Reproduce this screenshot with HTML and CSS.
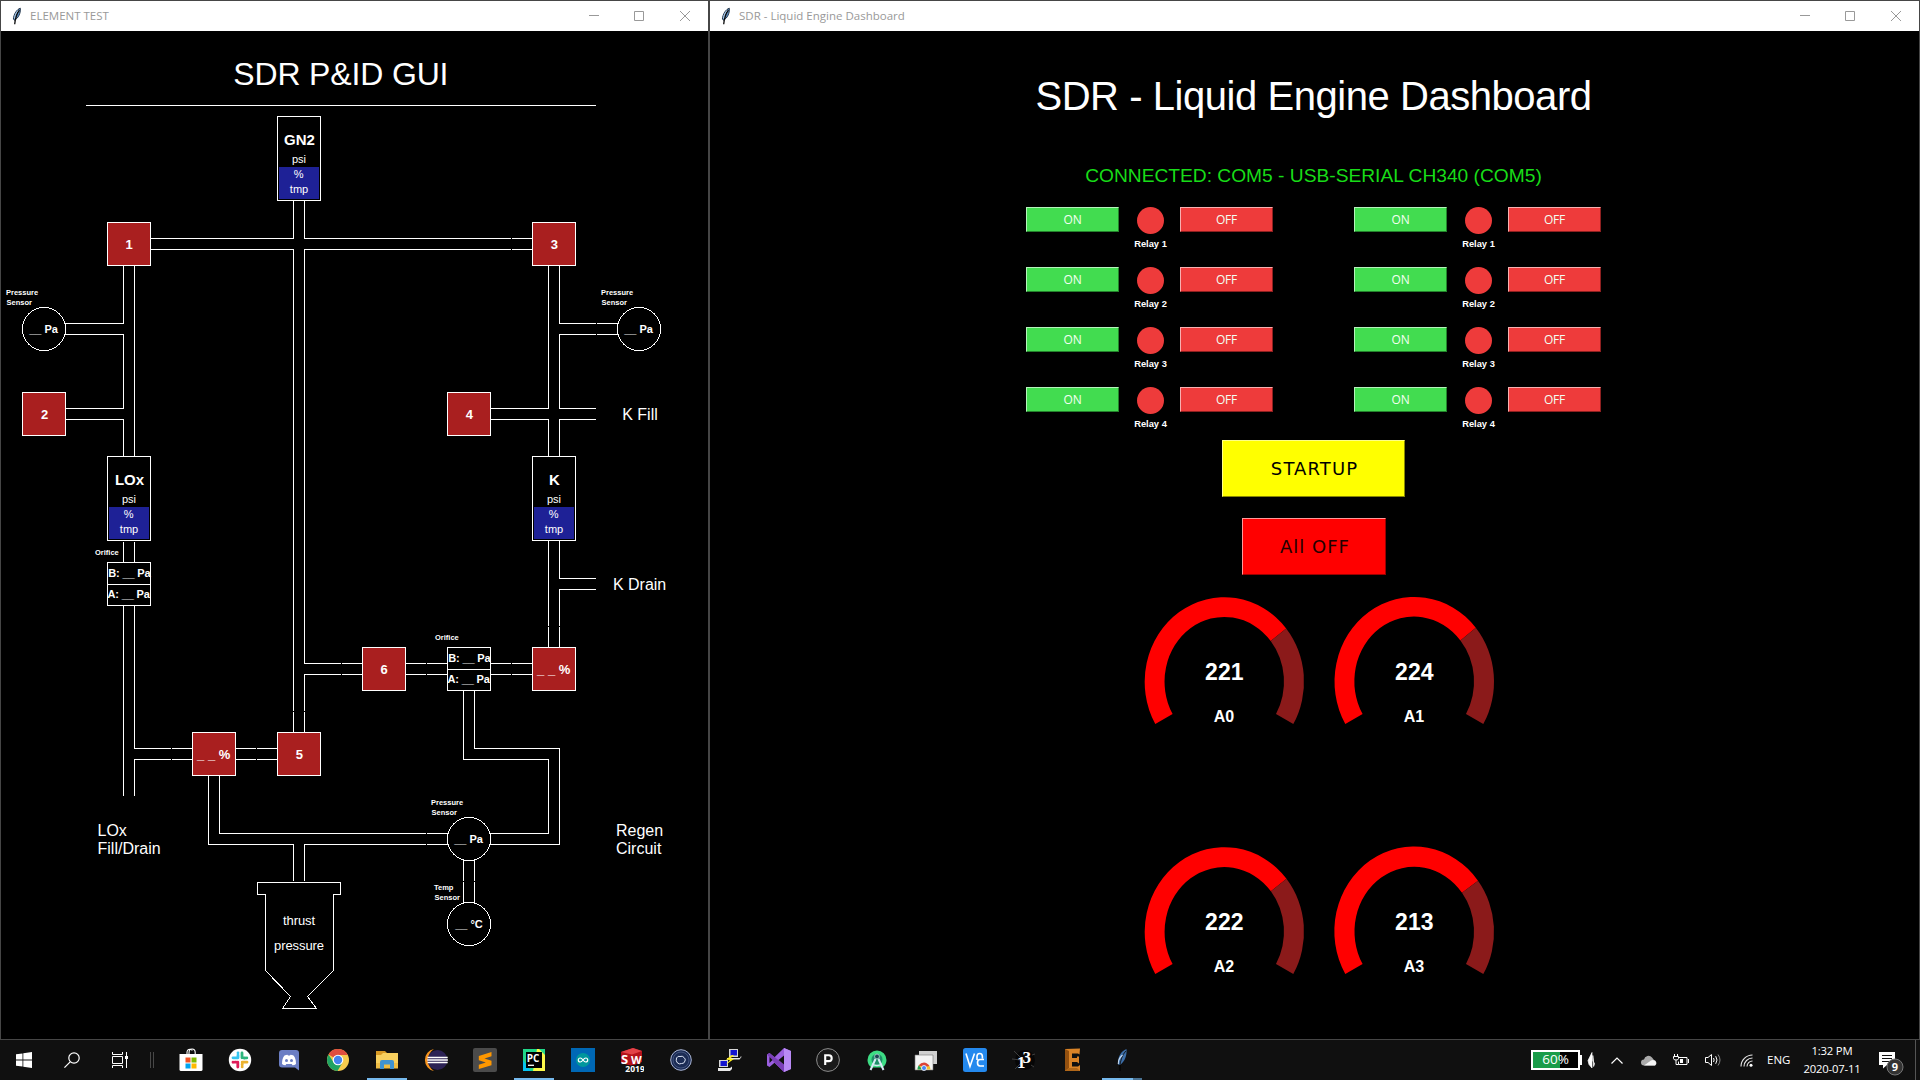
FILE: index.html
```html
<!DOCTYPE html>
<html lang="en">
<head>
<meta charset="utf-8">
<title>SDR - Liquid Engine Dashboard</title>
<link rel="stylesheet" href="styles.css">
</head>
<body>
<svg class="defs" width="0" height="0" aria-hidden="true">
  <defs>
    <symbol id="feather" viewBox="0 0 12 18">
      <path d="M9.3 1.2C6 2.2 2.6 7 2.4 12.2l1.2 1C7.300 11 9.800 6.500 9.300 1.200z" fill="#5c8fc4" stroke="#16283c" stroke-width=".9"/>
      <path d="M8.400 3C6 6 4.400 10 3.700 17.200" fill="none" stroke="#0b0b0b" stroke-width="1.300"/>
      <path d="M7 3.500C5 5.500 3.700 8.500 3.500 11.500" fill="none" stroke="#cfe2f3" stroke-width=".8"/>
    </symbol>
    <symbol id="win-min" viewBox="0 0 10 10"><path d="M0 4.500h10" stroke="#999" fill="none"/></symbol>
    <symbol id="win-max" viewBox="0 0 10 10"><path d="M.5.5h9v9h-9z" stroke="#999" fill="none"/></symbol>
    <symbol id="win-close" viewBox="0 0 10 10"><path d="M0 0l10 10M10 0L0 10" stroke="#999" fill="none"/></symbol>
    <g id="valve"><rect x=".5" y=".5" width="43" height="43" class="valve"/></g>
    <g id="tank">
      <rect x=".5" y=".5" width="43" height="84" class="shape"/>
      <rect x="2" y="51" width="40" height="32" class="liquid"/>
      <text x="22" y="47" class="t11 mid">psi</text>
      <text x="21.700" y="61.500" class="t11 mid">%</text>
      <text x="22" y="77" class="t11 mid">tmp</text>
    </g>
    <g id="orifice">
      <path d="M.5.5h43v43h-43zM.5 22.500h43" class="shape"/>
      <text x="-12" y="-7.300" class="tag">Orifice</text>
      <text x="1.300" y="14.700" class="reading">B: __ Pa</text>
      <text x=".5" y="35.700" class="reading">A: __ Pa</text>
    </g>
    <g id="psensor">
      <circle cx="22" cy="22" r="21.500" class="shape"/>
      <text x="-16" y="-12" class="tag">Pressure</text>
      <text x="-15.500" y="-2" class="tag">Sensor</text>
      <text x="21.600" y="26" class="t11 b mid">__ Pa</text>
    </g>
  </defs>
</svg>

<div class="desktop">
  <main class="windows">
    <section class="window pid">
      <header class="titlebar">
        <svg class="app-icon"><use href="#feather"/></svg>
        <span class="caption element">ELEMENT TEST</span>
        <span class="ctl"><svg><use href="#win-min"/></svg></span>
        <span class="ctl"><svg><use href="#win-max"/></svg></span>
        <span class="ctl"><svg><use href="#win-close"/></svg></span>
      </header>
      <svg class="diagram" viewBox="1 31 707 1008" width="707" height="1008">
        <text x="340.800" y="85" class="heading mid">SDR P&amp;ID GUI</text>
        <path class="line" d="M86 105.500H596"/>

        <path class="line" d="
          M293.500 201V238.500H151 M304.500 201V238.500H532
          M151 249.500H293.500V732 M532 249.500H304.500V663.500H362
          M362 674.500H304.500V732
          M123.500 266V323.500H65 M134.500 266V456
          M65 334.500H123.500V408.500H66 M66 419.500H123.500V456
          M123.500 542V562 M134.500 542V562
          M123.500 606V796 M134.500 606V748.500H192 M192 759.500H134.500V796
          M236 748.500H277 M236 759.500H277
          M208.500 776V844.500H293.500V881 M219.500 776V833.500H448
          M448 844.500H304.500V881
          M548.500 266V408.500H491 M559.500 266V323.500H618
          M618 334.500H559.500V408.500H596 M491 419.500H548.500V456
          M596 419.500H559.500V456
          M548.500 541V647 M559.500 541V578.500H596 M596 589.500H559.500V647
          M406 663.500H447 M406 674.500H447 M491 663.500H532 M491 674.500H532
          M463.500 691V759.500H548.500V833.500H490
          M474.500 691V748.500H559.500V844.500H490
          M463.500 860V903 M474.500 860V903"/>
        <path class="joint" d="
          M511.500 237V251 M596.500 322V336 M341.500 662V676 M426.500 662V676 M511.500 662V676
          M171.500 747V761 M256.500 747V761 M426.500 832V846
          M292 711.500H306 M547 626.500H561 M462 881.500H476"/>

        <use href="#tank" x="277" y="116"/><text x="299.500" y="145" class="name mid">GN2</text>
        <use href="#tank" x="107" y="456"/><text x="129.500" y="485" class="name mid">LOx</text>
        <use href="#tank" x="532" y="456"/><text x="554.500" y="485" class="name mid">K</text>

        <use href="#valve" x="107" y="222"/><text x="129" y="249" class="num mid">1</text>
        <use href="#valve" x="22" y="392"/><text x="44.500" y="419" class="num mid">2</text>
        <use href="#valve" x="532" y="222"/><text x="554.300" y="249" class="num mid">3</text>
        <use href="#valve" x="447" y="392"/><text x="469.300" y="419" class="num mid">4</text>
        <use href="#valve" x="277" y="732"/><text x="299.300" y="759" class="num mid">5</text>
        <use href="#valve" x="362" y="647"/><text x="384.200" y="674" class="num mid">6</text>
        <use href="#valve" x="192" y="732"/><text x="213.700" y="759" class="num mid">_ _ %</text>
        <use href="#valve" x="532" y="647"/><text x="553.700" y="674" class="num mid">_ _ %</text>

        <use href="#orifice" x="107" y="562"/>
        <use href="#orifice" x="447" y="647"/>
        <use href="#psensor" x="22" y="307"/>
        <use href="#psensor" x="617" y="307"/>
        <use href="#psensor" x="447" y="817"/>
        <circle cx="469" cy="924" r="21.500" class="shape"/>
        <text x="434" y="890" class="tag">Temp</text>
        <text x="434.500" y="900" class="tag">Sensor</text>
        <text x="469" y="928" class="t11 b mid">__ °C</text>

        <path class="shape" d="M257.500 882.500H340.500V894.500H333.500V970.500L307.500 996.500L316.500 1008.500H282.500L290.500 996.500L265.500 970.500V894.500H257.500Z"/>
        <text x="299" y="925" class="t13 mid">thrust</text>
        <text x="299" y="950" class="t13 mid">pressure</text>

        <text x="640" y="420" class="t16 mid">K Fill</text>
        <text x="639.600" y="590" class="t16 mid">K Drain</text>
        <text x="97.500" y="836" class="t16">LOx</text>
        <text x="97.500" y="854" class="t16">Fill/Drain</text>
        <text x="616" y="836" class="t16">Regen</text>
        <text x="616" y="854" class="t16">Circuit</text>
      </svg>
    </section>

    <section class="window dash">
      <header class="titlebar">
        <svg class="app-icon"><use href="#feather"/></svg>
        <span class="caption">SDR - Liquid Engine Dashboard</span>
        <span class="ctl"><svg><use href="#win-min"/></svg></span>
        <span class="ctl"><svg><use href="#win-max"/></svg></span>
        <span class="ctl"><svg><use href="#win-close"/></svg></span>
      </header>
      <div class="dash-body">
        <h1>SDR - Liquid Engine Dashboard</h1>
        <p class="status">CONNECTED: COM5 - USB-SERIAL CH340 (COM5)</p>
        <div class="relays">
          <div class="relay"><button class="btn on">ON</button><div class="lamp"><i></i><b>Relay 1</b></div><button class="btn off">OFF</button></div>
          <div class="relay"><button class="btn on">ON</button><div class="lamp"><i></i><b>Relay 1</b></div><button class="btn off">OFF</button></div>
          <div class="relay"><button class="btn on">ON</button><div class="lamp"><i></i><b>Relay 2</b></div><button class="btn off">OFF</button></div>
          <div class="relay"><button class="btn on">ON</button><div class="lamp"><i></i><b>Relay 2</b></div><button class="btn off">OFF</button></div>
          <div class="relay"><button class="btn on">ON</button><div class="lamp"><i></i><b>Relay 3</b></div><button class="btn off">OFF</button></div>
          <div class="relay"><button class="btn on">ON</button><div class="lamp"><i></i><b>Relay 3</b></div><button class="btn off">OFF</button></div>
          <div class="relay"><button class="btn on">ON</button><div class="lamp"><i></i><b>Relay 4</b></div><button class="btn off">OFF</button></div>
          <div class="relay"><button class="btn on">ON</button><div class="lamp"><i></i><b>Relay 4</b></div><button class="btn off">OFF</button></div>
        </div>
        <button class="big startup">STARTUP</button>
        <button class="big alloff">All OFF</button>
        <div class="gauges">
          <svg class="gauge" viewBox="-95.300 -84.700 190 140">
            <path class="g-on" d="M-69 42.400A79.700 84.700 0 0 1 61.900 -53.300L46.400 -40.700A59.700 64.700 0 0 0 -51.700 32.400Z"/>
            <path class="g-off" d="M61.900 -53.300A79.700 84.700 0 0 1 69 42.400L51.700 32.400A59.700 64.700 0 0 0 46.400 -40.700Z"/>
            <text x="0" y="-2" class="g-val mid">221</text><text x="-.3" y="40.300" class="g-name mid">A0</text>
          </svg>
          <svg class="gauge" viewBox="-95.300 -84.700 190 140">
            <path class="g-on" d="M-69 42.400A79.700 84.700 0 0 1 61.500 -53.900L46.100 -41.200A59.700 64.700 0 0 0 -51.700 32.400Z"/>
            <path class="g-off" d="M61.500 -53.900A79.700 84.700 0 0 1 69 42.400L51.700 32.400A59.700 64.700 0 0 0 46.100 -41.200Z"/>
            <text x="0" y="-2" class="g-val mid">224</text><text x="-.3" y="40.300" class="g-name mid">A1</text>
          </svg>
          <svg class="gauge" viewBox="-95.300 -84.700 190 140">
            <path class="g-on" d="M-69 42.400A79.700 84.700 0 0 1 62.200 -52.900L46.600 -40.400A59.700 64.700 0 0 0 -51.700 32.400Z"/>
            <path class="g-off" d="M62.200 -52.900A79.700 84.700 0 0 1 69 42.400L51.700 32.400A59.700 64.700 0 0 0 46.600 -40.400Z"/>
            <text x="0" y="-2" class="g-val mid">222</text><text x="-.3" y="40.300" class="g-name mid">A2</text>
          </svg>
          <svg class="gauge" viewBox="-95.300 -84.700 190 140">
            <path class="g-on" d="M-69 42.400A79.700 84.700 0 0 1 63.700 -51L47.700 -38.900A59.700 64.700 0 0 0 -51.700 32.400Z"/>
            <path class="g-off" d="M63.700 -51A79.700 84.700 0 0 1 69 42.400L51.700 32.400A59.700 64.700 0 0 0 47.700 -38.900Z"/>
            <text x="0" y="-2" class="g-val mid">213</text><text x="-.3" y="40.300" class="g-name mid">A3</text>
          </svg>
        </div>
      </div>
    </section>
  </main>

  <footer class="taskbar">
    <div class="system">
      <span class="sys"><svg viewBox="0 0 16 16" width="16" height="16"><path fill="#fff" d="M0 2.300L6.500 1.400V7.600H0zM7.300 1.200L16 0V7.600H7.300zM0 8.400H6.500V14.600L0 13.700zM7.300 8.400H16V16L7.300 14.800z"/></svg></span>
      <span class="sys"><svg viewBox="0 0 16 16" width="16" height="16"><g fill="none" stroke="#fff" stroke-width="1.200"><circle cx="10" cy="6" r="5.200"/><path d="M6.200 9.800L.4 15.600"/></g></svg></span>
      <span class="sys"><svg viewBox="0 0 16 16" width="16" height="16"><g fill="none" stroke="#fff"><path d="M.5 0v2.500h10V0M.5 16v-2.500h10V16M.5 4.500h10v7H.5zM14.500 0v16"/><path d="M13 4h3v3h-3z" fill="#fff" stroke="none"/></g></svg></span>
      <span class="grip"></span>
    </div>
    <nav class="apps">
      <span class="app"><svg viewBox="0 0 24 24"><path d="M8 7V4.500Q8 1.200 11 1.200Q12.500 1.200 13.300 2.500M10 7V5Q10 1 13 1Q16.200 1 16.200 4.500V7" fill="none" stroke="#fff" stroke-width="1.100"/><path d="M.5 6h23v15.500q0 1.500-1.500 1.500H2q-1.500 0-1.500-1.500z" fill="#fff"/><path d="M6.500 9.500h5v5h-5z" fill="#f25022"/><path d="M12.500 9.500h5v5h-5z" fill="#7fba00"/><path d="M6.500 15.500h5v5h-5z" fill="#00a4ef"/><path d="M12.500 15.500h5v5h-5z" fill="#ffb900"/></svg></span>
      <span class="app"><svg viewBox="0 0 24 24"><circle cx="12" cy="12" r="11.200" fill="#fff"/><g fill="none" stroke-width="2.800" stroke-linecap="round"><path d="M10 4.800v.1M5 9.800h5M10 7v2.500" stroke="#36c5f0"/><path d="M14 5v4.800M18.800 9.800v.1M16 10h1" stroke="#2eb67d"/><path d="M14.200 18.800v.1M14.200 14.200H19M14.200 16v1" stroke="#ecb22e"/><path d="M9.800 14.200V19M5 14.200v.1M7 14.200h1" stroke="#e01e5a"/></g></svg></span>
      <span class="app"><svg viewBox="0 0 24 24"><path d="M5 2h14q3 0 3 3v17.500l-4-3H5q-3 0-3-3V5q0-3 3-3z" fill="#6b7ec4"/><path d="M5 16Q5 10 7.500 7.500Q9 6.700 10.500 6.700L11 7.500h2l.5-.8Q15 6.700 16.500 7.500Q19 10 19 16Q17.500 17.300 15.500 17.300l-.8-1.200H9.300l-.8 1.200Q6.500 17.300 5 16z" fill="#fff"/><circle cx="9.500" cy="12.500" r="1.500" fill="#6b7ec4"/><circle cx="14.500" cy="12.500" r="1.500" fill="#6b7ec4"/></svg></span>
      <span class="app"><svg viewBox="0 0 24 24"><circle cx="12" cy="12" r="11" fill="#f7cb4d"/><path d="M12 12L2.500 6.500A11 11 0 0 1 21.800 7H12z" fill="#e04e3f"/><path d="M2.500 6.500A11 11 0 0 0 11.500 23L16.500 14.500L7.800 14.500z" fill="#1fa362"/><circle cx="12" cy="12" r="5.300" fill="#fff"/><circle cx="12" cy="12" r="4.200" fill="#4584ee"/></svg></span>
      <span class="app open"><svg viewBox="0 0 24 24"><path d="M1 3h9l2 2h11v3H1z" fill="#d99a24"/><path d="M1 7h5l2-2h15v15H1z" fill="#f8d05e"/><path d="M1 15h22v5.500H1z" fill="#efbd45"/><path d="M5 21v-7q0-2 2-2h10q2 0 2 2v7h-4v-4.500H9V21z" fill="#3f93d2"/></svg></span>
      <span class="app"><svg viewBox="0 0 24 24"><path d="M10 1A11.200 11.200 0 0 0 10 23A13 13 0 0 1 10 1z" fill="#f7941e"/><circle cx="13.500" cy="12" r="10" fill="#2c2255"/><path d="M3.500 9.500h20.200M3.200 12h20.700M3.500 14.500h20.200" stroke="#fff" stroke-width="1.500"/></svg></span>
      <span class="app"><svg viewBox="0 0 24 24"><rect width="24" height="24" rx="2" fill="#4b4b4b"/><path d="M18.500 4v4.200l-7 2.300 7 2.200v4.500L5.800 21v-4.200l7-2.300-7-2.200V7.900z" fill="#ff9800"/></svg></span>
      <span class="app open"><svg viewBox="0 0 24 24"><path d="M1 1h22v22H1z" fill="#21d789"/><path d="M15 1h8v22H11z" fill="#fcf84a"/><path d="M1 12l8 11H1z" fill="#07c3f2"/><path d="M17 1h6v6z" fill="#21d789"/><path d="M4 4h16v16H4z" fill="#000"/><text x="4.800" y="13.500" class="ic" font-size="10">PC</text><path d="M6 17.300h6" stroke="#fff" stroke-width="1.300"/></svg></span>
      <span class="app"><svg viewBox="0 0 24 24"><path d="M0 0h24v24H0z" fill="#0068b5"/><circle cx="12" cy="12" r="7" fill="#00979d"/><path d="M12 12q-1.500-2-2.700-2a1.900 1.900 0 0 0 0 4Q10.500 14 12 12q1.500-2 2.700-2a1.900 1.900 0 0 1 0 4Q13.500 14 12 12" fill="none" stroke="#fff" stroke-width="1.200"/></svg></span>
      <span class="app"><svg viewBox="0 0 24 24"><path d="M1 4L13 0l9 3v11l-10 4-11-3z" fill="#b5121b"/><path d="M1 4l11 2.500L22 3 13 0z" fill="#e34248"/><text x="1" y="16" class="ic" font-size="13">S</text><text x="11" y="15.500" class="ic" font-size="11">W</text><text x="5.300" y="23.500" class="ic" font-size="8.500" stroke="#111" stroke-width="2" paint-order="stroke">2019</text></svg></span>
      <span class="app"><svg viewBox="0 0 24 24"><circle cx="12" cy="12" r="10.300" fill="#1c2c55" stroke="#a8b4d4" stroke-width="1"/><circle cx="12" cy="12" r="8" fill="none" stroke="#53648f" stroke-width=".7"/><path d="M7.500 10Q9 7.500 11 8.500q2.500-1 4 1 2 1.500 1 3.500-1 3-3.500 2.500-2 1-4-.5-2-2-1-5z" fill="none" stroke="#dce4f5" stroke-width="1"/></svg></span>
      <span class="app"><svg viewBox="0 0 24 24"><path d="M11 1h9v8h-9zM1 12h9v7H1z" fill="#d6d6d6"/><path d="M12.500 2h6.500v5.500h-6.500zM2.500 13H9v5H2.500z" fill="#1414d0"/><path d="M9 10h13l1-2 .5 1-2 2.500H9zM0 20h12l2-1.500v2.500L12 23H0z" fill="#e8e8e8"/><path d="M14 7l-6 4.500 4 .5-4 4.500 8-5.500-4-.5 4-3z" fill="#ffee1c"/></svg></span>
      <span class="app"><svg viewBox="0 0 24 24"><path d="M17 0l7 3v18l-7 3L7.500 14.800 2.500 19 0 17.500v-11L2.500 5l5 4.200z" fill="#9b5fe0"/><path d="M0 6.500L2.500 5 17 16.500V24L7.500 14.800z" fill="#7b3fb8"/><path d="M17 7.500v9L11.500 12zM2.500 9v6L5.500 12z" fill="#111"/><path d="M17 0l7 3v18l-7 3z" fill="#b98af5"/></svg></span>
      <span class="app"><svg viewBox="0 0 24 24"><circle cx="12" cy="12" r="11.400" fill="#1a1a1a" stroke="#9a9a9a" stroke-width=".9"/><path d="M9.200 17V7.300h3.600a2.900 2.900 0 0 1 0 5.800H9.500" fill="none" stroke="#fff" stroke-width="2.100"/></svg></span>
      <span class="app"><svg viewBox="0 0 24 24"><path d="M2.500 12a9.500 9.500 0 1 1 19 0q0 4.500-4 7.500h-11q-4-3-4-7.500z" fill="#3ddc84"/><circle cx="12" cy="11.500" r="5.500" fill="#1e8f69"/><path d="M10.500 11L5.500 22M13.500 11L18.500 22" stroke="#d7e9f4" stroke-width="2"/><path d="M7 16q5 3 10 0" fill="none" stroke="#d7e9f4" stroke-width="1.300"/><circle cx="12" cy="8.500" r="2.400" fill="#1b4353" stroke="#cfe5e8" stroke-width=".7"/></svg></span>
      <span class="app"><svg viewBox="0 0 24 24"><path d="M5 3h18v13H5z" fill="#d0d0d0"/><path d="M1 7h18v15H1z" fill="#f4f4f4" stroke="#777" stroke-width=".6"/><path d="M3.500 21.500a6.500 6.500 0 0 1 13 0z" fill="#f2c230"/><path d="M4.500 17.500Q7 14.500 10 14.500t5.500 3.500l-5 1z" fill="#dc4437"/><path d="M3.500 21.500q0-2.500 1.300-4.200L8 21.500z" fill="#1fa05a"/><circle cx="10" cy="20" r="2.500" fill="#4587f4" stroke="#fff" stroke-width=".8"/></svg></span>
      <span class="app"><svg viewBox="0 0 24 24"><rect width="24" height="24" rx="2.500" fill="#2489ee"/><path d="M3 5.500L7 18.500 11.500 5.500M14 12V8.500Q14 5.500 16.700 5.500t2.700 3V10.500M21 11.500h-4q-2.500 0-2.500 3.200t2.500 3.300h4" fill="none" stroke="#fff" stroke-width="1.600"/></svg></span>
      <span class="app"><svg viewBox="0 0 24 24"><circle cx="13" cy="12" r="10" fill="#060606"/><path d="M0 11l9 1M2 3l7 7M3 21l6-6M23 6l-3 1M22 19l-3-2" stroke="#444" stroke-width=".9"/><text x="5" y="20" class="ic serif" font-size="17">1</text><text x="10.500" y="15" class="ic serif" font-size="17">3</text></svg></span>
      <span class="app"><svg viewBox="0 0 24 24"><path d="M4 1l15-.5-.5 6L17 5.500h-6V10h5V8.500h2v7l-2-1.500h-5v4.500h6l2-1.500v6L4 23z" fill="#d98327"/><path d="M4 1l4 2v17l-4 3z" fill="#93500f"/><path d="M8 20h8l3 3H4z" fill="#b06719"/></svg></span>
      <span class="app open partial"><svg viewBox="-3 -1 24 24"><path d="M13.500 0C8 2 4.500 8 5 15.500l2 .5C12 12 14 6.500 13.500 0z" fill="#3c6ea8"/><path d="M12.800 2C9 6 7.500 12 6.800 17" fill="none" stroke="#111" stroke-width=".9"/><path d="M5.300 15q-.3-5 4.200-9" fill="none" stroke="#c9ddf2" stroke-width="1.100"/><path d="M7 16v6" stroke="#000" stroke-width="1.200"/></svg></span>
    </nav>
    <div class="tray">
      <span class="charge">60%</span>
      <svg class="i-pen" viewBox="0 0 8 16" width="8" height="16"><path d="M5 .5L1 8.500l1 4L5 16V9zM5.800 3.500V9l1.800 2.500-1 3L6.500 9z" fill="#fff" stroke="#fff" stroke-width=".7"/></svg>
      <svg class="i-up" viewBox="0 0 12 7" width="12" height="7"><path d="M.5 6.500L6 1l5.500 5.500" fill="none" stroke="#fff" stroke-width="1.200"/></svg>
      <svg class="i-cloud" viewBox="0 0 17 11" width="17" height="11"><path d="M3 10.500a3 3 0 0 1 0-6A4.500 4.500 0 0 1 11 2.500L13 5a3 3 0 0 1 1 5.500z" fill="#aaa"/><path d="M3 10.500L10 5.500a4 4 0 0 1 3.500 0 3 3 0 0 1 .5 5z" fill="#f4f4f4"/></svg>
      <svg class="i-power" viewBox="0 0 16 12" width="16" height="12"><g fill="none" stroke="#fff"><path d="M5.500 3.500h8.500v7H5.500v-3M15.500 5v4M1.500 0v2.500M4.500 0v2.500M.5 2.500h5v2q0 1.500-2.500 1.500T.5 4.500zM3 6v4.500h2.500"/></g><path d="M7 5h3v4H7z" fill="#fff"/></svg>
      <svg class="i-vol" viewBox="0 0 17 14" width="17" height="14"><g fill="none" stroke="#fff"><path d="M.5 4.500H3L6.500 1.500v11L3 9.500H.5zM8.500 5q1.300 2 0 4M10.700 3.200q2.600 3.800 0 7.600"/><path d="M13 1.500q4 5.500 0 11" stroke="#888"/></g></svg>
      <svg class="i-wifi" viewBox="0 0 13 13" width="13" height="13"><g fill="none" stroke="#e8e8e8" stroke-width="1.100"><path d="M1 12.500A11.500 11.500 0 0 1 12.500 1M4 12.500A8.500 8.500 0 0 1 12.500 4M7 12.500A5.500 5.500 0 0 1 12.500 7"/></g><circle cx="11" cy="11.300" r="1.500" fill="#fff"/></svg>
      <span class="lang">ENG</span>
      <span class="clock"><span>1:32 PM</span><span>2020-07-11</span></span>
      <svg class="i-note" viewBox="0 0 25 24" width="25" height="24"><path d="M0 0h16v13H8l-4 3.500V13H0z" fill="#fff"/><path d="M3 3.500h10M3 6.500h10M3 9.500h7" stroke="#111"/><circle cx="16" cy="15" r="8" fill="#333" stroke="#777"/><text x="16" y="19" class="badge mid">9</text></svg>
      <span class="peek"></span>
    </div>
  </footer>
</div>
</body>
</html>
```
FILE: styles.css
```css
* { box-sizing: border-box; }
body { margin: 0; background: #000; font-family: "Liberation Sans", Arial, sans-serif; }
.defs { position: absolute; }
.desktop { width: 1920px; height: 1080px; display: flex; flex-direction: column; overflow: hidden; }
.windows { display: flex; height: 1040px; background: #464646; padding: 1px; gap: 2px; }
.window { background: #000; display: flex; flex-direction: column; overflow: hidden; }
.pid { width: 707px; }
.dash { width: 1209px; }

.titlebar { height: 30px; flex: none; background: #fff; display: flex; align-items: center; padding: 0 0 1px 10px; }
.app-icon { width: 12px; height: 18px; margin-right: 7px; }
.caption { flex: 1; font: 11.5px/16px "Open Sans", "Noto Sans", sans-serif; color: #999; }
.ctl { width: 46px; display: flex; justify-content: center; }
.ctl svg { width: 10px; height: 10px; }
.caption + .ctl { padding-left: 2px; }

.diagram { display: block; }
.line, .joint, .shape, .valve { shape-rendering: crispEdges; stroke-width: 1; fill: none; stroke: #fff; }
.joint { stroke: #000; }
.valve { fill: #a91f1f; }
.liquid { fill: #1e2196; }
text { fill: #fff; white-space: pre; }
.mid { text-anchor: middle; }
.b { font-weight: bold; }
.heading { font-size: 32px; letter-spacing: -.15px; }
.name { font-size: 15px; font-weight: bold; }
.num { font-size: 13px; font-weight: bold; }
.t11 { font-size: 11px; }
.t13 { font-size: 13px; letter-spacing: -.1px; }
.t16 { font-size: 16px; }
.tag { font-size: 7.5px; font-weight: bold; }
.reading { font-size: 11px; font-weight: bold; letter-spacing: -.15px; }

.dash-body { flex: 1; display: flex; flex-direction: column; align-items: center; padding: 42px 2px 0 0; }
h1 { margin: 0; font-size: 40px; line-height: 46px; font-weight: normal; color: #fff; letter-spacing: -.45px; }
.status { margin: 45px 0 19px; font-size: 19.2px; line-height: 24px; color: #18dc18; }
.relays { display: grid; grid-template-columns: 247px 247px; column-gap: 81px; row-gap: 8px; }
.relay { display: flex; height: 52px; align-items: flex-start; }
.btn { width: 93px; height: 25px; padding: 0 0 1px; font: 12px/15px "Open Sans", "Noto Sans", sans-serif; letter-spacing: -.2px; color: #f2fff2; border: 1px solid; }
.on { background: #42dc50; border-color: #b4f4ba #24822c #24822c #b4f4ba; }
.off { background: #ee3b3b; border-color: #f8b0b0 #8e2020 #8e2020 #f8b0b0; }
.lamp { width: 61px; padding-left: 2px; display: flex; flex-direction: column; align-items: center; }
.lamp i { width: 27px; height: 27px; border-radius: 50%; background: #ee3b3b; margin-bottom: 4px; }
.lamp b { font-size: 9.33px; line-height: 12px; color: #fff; }
.big { height: 57px; padding: 0; border: 1px solid; color: #000; font: 18px/24px "DejaVu Sans", Verdana, sans-serif; }
.startup { width: 183px; margin-top: 1px; padding-left: 2px; background: #ff0; border-color: #ff8 #880 #880 #ff8; letter-spacing: 1.1px; }
.alloff { width: 144px; margin: 21px 0 22px; padding-left: 3px; background: #f00; color: #200; border-color: #f99 #900 #900 #f99; letter-spacing: 1px; }
.gauges { display: grid; grid-template-columns: 190px 190px; row-gap: 110px; margin-left: 11px; }
.gauge { width: 190px; height: 140px; display: block; overflow: visible; }
.g-on { fill: #f00; }
.g-off { fill: #8b1a1a; }
.g-val { font-size: 23px; font-weight: bold; }
.g-name { font-size: 16px; font-weight: bold; }

.taskbar { height: 40px; background: #101010; display: flex; align-items: stretch; }
.system { width: 166px; display: flex; align-items: center; }
.sys { width: 48px; flex: none; display: flex; justify-content: center; }
.grip { width: 4px; height: 16px; margin-left: 6px; border: solid #484848; border-width: 0 1px; }
.apps { display: flex; }
.app { width: 49px; display: flex; align-items: center; justify-content: center; }
.app svg { width: 24px; height: 24px; display: block; }
.open { background: linear-gradient(#76b9ed, #76b9ed) center bottom / 40px 2px no-repeat; }
.partial { background: linear-gradient(90deg, #76b9ed 31px, #4a7394 31px) center bottom / 40px 2px no-repeat; }
.ic { font-family: "Open Sans", "Noto Sans", sans-serif; font-weight: bold; fill: #fff; }
.serif { font-family: "Liberation Serif", serif; }

.tray { flex: 1; display: flex; align-items: center; justify-content: flex-end; color: #fff; font: 12px/18px "Open Sans", "Noto Sans", sans-serif; }
.tray svg { flex: none; display: block; }
.charge { width: 49px; height: 20px; border: 2px solid #fff; background: linear-gradient(90deg, #1a9c49 27px, #000 27px); text-align: center; line-height: 15px; font-size: 13.5px; margin-right: 7px; position: relative; }
.charge::after { content: ""; position: absolute; left: 47px; top: 3px; width: 2px; height: 10px; background: #fff; }
.i-pen { margin-right: 16px; }
.i-up { margin-right: 18px; }
.i-cloud { margin-right: 15px; }
.i-power { margin-right: 16px; }
.i-vol { margin-right: 18px; }
.i-wifi { margin-right: 14px; }
.lang { width: 25px; font-size: 11.5px; margin-right: 10px; }
.clock { width: 60px; display: flex; flex-direction: column; align-items: center; font-size: 11.3px; margin-right: 17px; letter-spacing: -.2px; white-space: nowrap; }
.i-note { margin-top: 7px; margin-right: 11px; }
.peek { width: 5px; height: 40px; border-left: 1px solid #555; }
.badge { font-size: 11px; font-weight: bold; }
```
